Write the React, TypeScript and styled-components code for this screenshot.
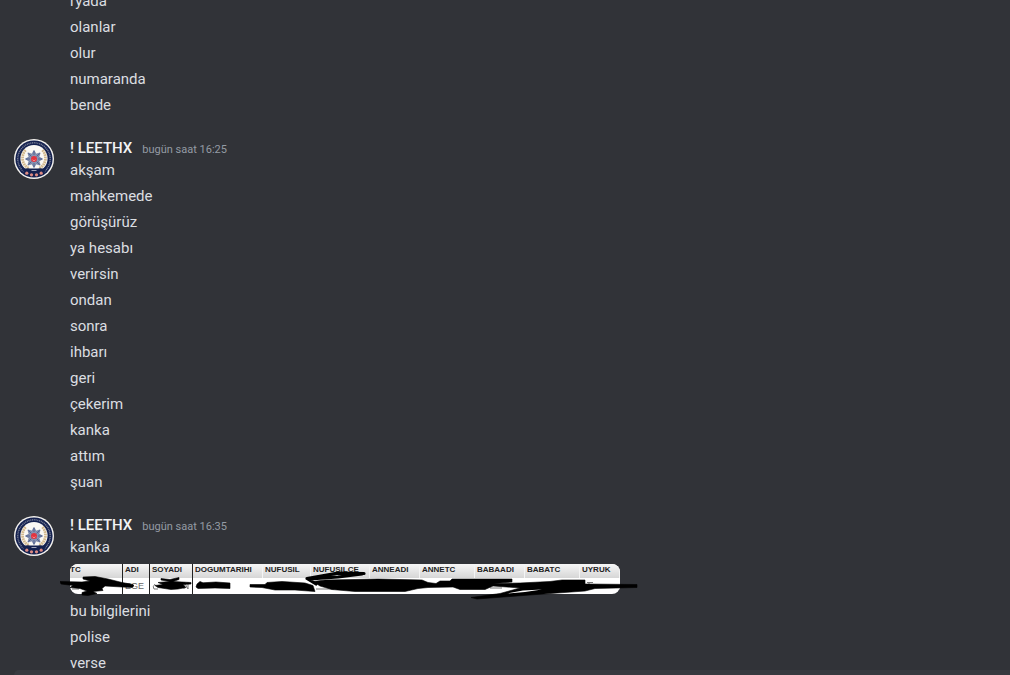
import React from 'react';
import styled, { createGlobalStyle } from 'styled-components';

const GlobalStyle = createGlobalStyle`
  * { box-sizing: border-box; }
  body { margin: 0; background: #313338; }
`;

const Page = styled.div`
  display: flex;
  flex-direction: column;
  height: 100vh;
  overflow: hidden;
  background: #313338;
  color: #dbdee1;
  font: 15px/22px Roboto, 'Noto Sans', sans-serif;
`;

const Log = styled.main`
  flex: 1;
  min-height: 0;
  overflow: hidden;
`;

const Group = styled.section`
  display: grid;
  grid-template-columns: 40px minmax(0, 1fr);
  column-gap: 16px;
  padding: 0 16px 0 14px;
  margin-bottom: 17px;
`;

const EarlierGroup = styled(Group)`
  margin-top: -12px;
`;

const Body = styled.div`
  grid-column: 2;
`;

const Header = styled.header`
  display: flex;
  align-items: baseline;
  gap: 10px;
  height: 22px;
`;

const Author = styled.h3`
  margin: 0;
  font-size: 15px;
  line-height: 26px;
  font-weight: 500;
  color: #f2f3f5;
`;

const Time = styled.time`
  font-size: 11px;
  line-height: 22px;
  color: #949ba4;
`;

const Line = styled.p`
  margin: 0;
  padding: 2px 0;
`;

const AvatarSvg = styled.svg`
  display: block;
  width: 40px;
  height: 40px;
  margin-top: 4px;
`;

const Attachment = styled.figure`
  position: relative;
  width: 550px;
  margin: 4px 0;
`;

const Sheet = styled.table`
  width: 100%;
  table-layout: fixed;
  border-collapse: separate;
  border-spacing: 0;
  overflow: hidden;
  border-radius: 8px;
  background: #fff;
  font: 8px/12px 'Liberation Sans', Arial, sans-serif;
`;

const HeadCell = styled.th<{ $w: number; $dark?: boolean }>`
  width: ${(p) => p.$w}px;
  height: 14px;
  padding: 0 0 2px 2px;
  text-align: left;
  white-space: nowrap;
  color: #222;
  background: linear-gradient(#f6f6f6, #d6d6d6);
  border-right: 1px solid ${(p) => (p.$dark ? '#222' : '#f4f4f4')};

  &:first-child {
    padding-left: 0;
  }
`;

const Cell = styled.td<{ $dark?: boolean }>`
  height: 16px;
  padding: 0 0 0 2px;
  white-space: nowrap;
  overflow: hidden;
  font-size: 9px;
  color: #666;
  border-right: 1px solid ${(p) => (p.$dark ? '#222' : '#fff')};
`;

const Scribble = styled.svg`
  position: absolute;
  left: -10px;
  top: -4px;
  width: 580px;
  height: 40px;
`;

const Composer = styled.footer`
  flex: none;
  height: 5px;
  margin-left: 14px;
  border-radius: 8px 0 0 0;
  background: #383a40;
`;

const columns = [
  { name: 'TC', w: 53, dark: true, value: '' },
  { name: 'ADI', w: 27, dark: true, value: 'EGE' },
  { name: 'SOYADI', w: 43, dark: true, value: '' },
  { name: 'DOGUMTARIHI', w: 70, value: '' },
  { name: 'NUFUSIL', w: 48, value: '' },
  { name: 'NUFUSILCE', w: 59, value: '' },
  { name: 'ANNEADI', w: 50, value: '' },
  { name: 'ANNETC', w: 55, value: '' },
  { name: 'BABAADI', w: 50, value: '' },
  { name: 'BABATC', w: 55, value: '' },
  { name: 'UYRUK', w: 40, value: '' },
];

const star = Array.from({ length: 16 }, (_, i) => {
  const r = i % 2 ? 5.2 : 8.6;
  const a = (i * Math.PI) / 8;
  return `${(20 + r * Math.sin(a)).toFixed(2)},${(20 - r * Math.cos(a)).toFixed(2)}`;
}).join(' ');

function Avatar() {
  return (
    <AvatarSvg viewBox="0 0 40 40" role="img" aria-label="Avatar">
      <circle cx="20" cy="20" r="20" fill="#f4f2ee" />
      <circle cx="20" cy="20" r="18.6" fill="#14214f" />
      <circle cx="20" cy="20" r="16.2" fill="none" stroke="#757b92" strokeWidth="1.5" strokeDasharray="1.1 .7" />
      <circle cx="20" cy="19.5" r="13.6" fill="#faf8f4" />
      <path d="M11.5 11C6.5 17 8 26 15 29.5M28.5 11C33.5 17 32 26 25 29.5" fill="none" stroke="#d3b98e" strokeWidth="2.8" strokeDasharray="1.8 .6" />
      <polygon points={star} fill="#8793b3" stroke="#5c6b97" strokeWidth=".7" />
      <path d="M20 12v4M20 24v4M12 20h4M24 20h4M14.5 14.5l3 3M25.5 14.5l-3 3M14.5 25.5l3-3M25.5 25.5l-3-3" stroke="#3f5083" strokeWidth=".7" />
      <circle cx="20" cy="20" r="3" fill="#e23440" />
      <path d="M18.4 20.6c.8 1.3 2.4 1.3 3.2 0" fill="none" stroke="#ffb5b0" strokeWidth=".7" />
      <path d="M8 30q6-1 8-.5h8q2-.5 8 .5l-3 5.5q-9 4.5-18 0z" fill="#14214f" />
      <path d="M17.5 31.5h5" stroke="#a0a5b8" strokeWidth="1" />
      <g fill="#dd8a82">
        <circle cx="12.8" cy="34.2" r="1.6" />
        <circle cx="17.5" cy="35.8" r="1.6" />
        <circle cx="22.5" cy="35.8" r="1.6" />
        <circle cx="27.2" cy="34.2" r="1.6" />
      </g>
    </AvatarSvg>
  );
}

function Records() {
  return (
    <Attachment>
      <Sheet>
        <thead>
          <tr>
            {columns.map((c) => (
              <HeadCell key={c.name} $w={c.w} $dark={c.dark}>{c.name}</HeadCell>
            ))}
          </tr>
        </thead>
        <tbody>
          <tr>
            {columns.map((c) => (
              <Cell key={c.name} $dark={c.dark}>{c.value}</Cell>
            ))}
          </tr>
        </tbody>
      </Sheet>
      <Scribble viewBox="0 0 580 40" aria-hidden="true">
        <g fill="none" stroke="#777" strokeWidth="1">
          <path d="M12 29h7M43 22.5h14M43 24h3M49 24h3M55 24h3M95 24q-3 3-1 5h4M124 29v-7l4 7v-7M256 29h18M430 28h12M527 22.5h6M529 22v3" />
        </g>
        <g fill="#000" stroke="#000" strokeWidth=".6" strokeLinejoin="round">
          <path d="M0 21.5L22 22L30 21L23 19V17L35 16.5L48 19L62 22.5L73 24.5Q75 26 72 27.5L62 27L45 26L42 28.5L43 30.5L33 31.5L37 33.5L28 35.5L22 35L22 32.5L27 31L20 28.5L10 27.5L13 25.5L1 24Z" />
          <path d="M95 25.5L103 24.5L98 22.5L110 21.5L101 20V18.5L110 19.5L119 17.5V19.5L113 21.5L131 22.5V24L123 24.5L126 27.5L118 29L111 29.5L98 27.5Z" />
          <path d="M137 24L140 21.5L143 22.8L156 22L170 23V28.5L155 28L138 28.5L136 27Z" />
          <path d="M190 24.5L205 24.5L207 22.5L222 21.5L245 23L253 25.5L255 31.5L235 30L215 30L202 27.5L190 27Z" />
          <path d="M253 21.5L265 20L295 19.5L318 19L362 20L368 22.5L376 23.5L380 21H390L392 19H452V22L433 23.5L460 23L490 21.5L502 20H525V24L577 24.5V27.5L535 28.5L525 31L470 35L417 39L411 37.5L440 33.5L460 28L433 26L425 29.5H400L393 27L368 27.5L358 28.5L345 31.5L295 31.5L272 29.5L260 26Z" />
          <path d="M304 13.5L278 13.2L247 18.5L256 24M250 19L278 17L302 14" fill="none" strokeWidth="3.2" strokeLinecap="round" />
        </g>
        <path d="M447 33.5L463 30.5L482 29.5L465 32Z" fill="#fff" />
      </Scribble>
    </Attachment>
  );
}

function Post({ time, children }: { time: string; children: React.ReactNode }) {
  return (
    <Group>
      <Avatar />
      <Body>
        <Header>
          <Author>! LEETHX</Author>
          <Time>bugün saat {time}</Time>
        </Header>
        {children}
      </Body>
    </Group>
  );
}

const earlier = ['ryada', 'olanlar', 'olur', 'numaranda', 'bende'];
const evening = ['akşam', 'mahkemede', 'görüşürüz', 'ya hesabı', 'verirsin', 'ondan', 'sonra', 'ihbarı', 'geri', 'çekerim', 'kanka', 'attım', 'şuan'];
const latest = ['bu bilgilerini', 'polise', 'verse'];

export default function App() {
  return (
    <Page>
      <GlobalStyle />
      <Log>
        <EarlierGroup>
          <Body>{earlier.map((t) => <Line key={t}>{t}</Line>)}</Body>
        </EarlierGroup>
        <Post time="16:25">{evening.map((t) => <Line key={t}>{t}</Line>)}</Post>
        <Post time="16:35">
          <Line>kanka</Line>
          <Records />
          {latest.map((t) => <Line key={t}>{t}</Line>)}
        </Post>
      </Log>
      <Composer />
    </Page>
  );
}
